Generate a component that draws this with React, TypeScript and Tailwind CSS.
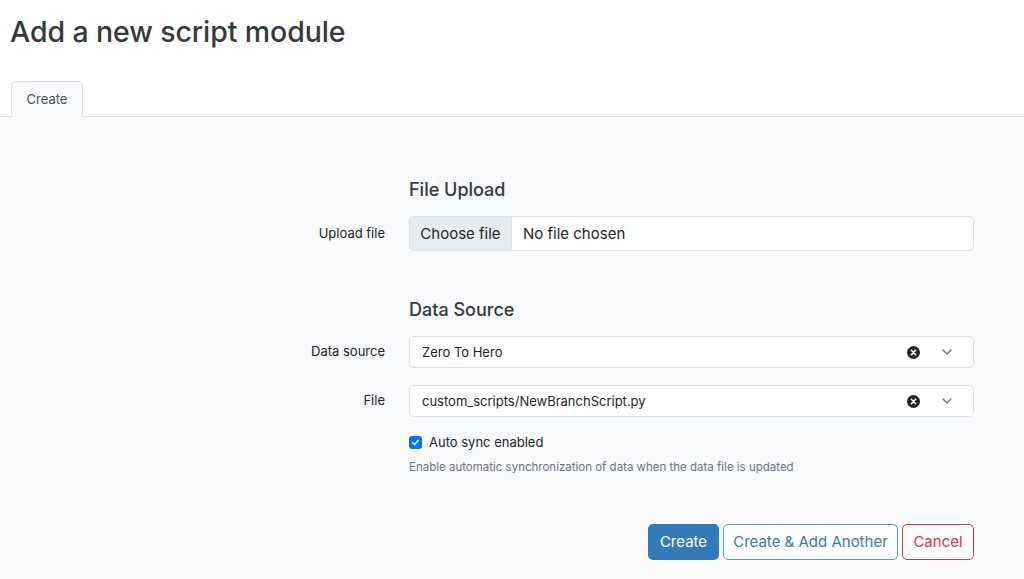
import { ChevronDown } from "lucide-react";

function ClearIcon() {
  return (
    <svg width="13" height="13" viewBox="0 0 16 16" className="shrink-0">
      <circle cx="8" cy="8" r="8" fill="#212529" />
      <path d="M5.3 5.3l5.4 5.4M10.7 5.3l-5.4 5.4" stroke="#fff" strokeWidth="1.8" strokeLinecap="round" />
    </svg>
  );
}

function SelectBox({ value }: { value: string }) {
  return (
    <div className="h-[32px] w-full rounded-[5px] border border-[#dee2e6] bg-white flex items-center pl-3 pr-[18px]">
      <span className="flex-1 text-[13px] text-[#212529] pt-px">{value}</span>
      <ClearIcon />
      <ChevronDown className="ml-[19px] text-[#6c757d]" size={16} strokeWidth={2} />
    </div>
  );
}

function Row({ label, children, className }: { label: string; children: React.ReactNode; className?: string }) {
  return (
    <div className={"flex items-center " + (className ?? "")}>
      <div className="w-[385px] shrink-0 text-right text-[13px] text-[#212529]">{label}</div>
      <div className="ml-6 w-[565px]">{children}</div>
    </div>
  );
}

export default function App() {
  return (
    <div className="w-[1024px] h-[579px] overflow-hidden flex flex-col bg-white text-[#212529]" style={{ fontFamily: "Inter, 'Noto Sans', sans-serif" }}>
      <h1 className="pl-[10px] pt-[14px] text-[28.5px] leading-[36px] font-medium text-[#343a40] tracking-[-0.1px]">Add a new script module</h1>
      <div className="mt-[31px] flex border-b border-[#dee2e6] pl-[11px]">
        <div className="-mb-px h-[36px] w-[72px] rounded-t-[5px] border border-b-0 border-[#dee2e6] bg-[#f8f9fa] flex items-center justify-center text-[13px] text-[#495057]">
          Create
        </div>
      </div>
      <div className="flex-1 bg-[#f8f9fa] flex flex-col">
        <div className="ml-[409px] mt-[62px] text-[18px] leading-[22px] font-medium text-[#343a40]">File Upload</div>
        <Row label="Upload file" className="mt-[15px]">
          <div className="h-[35px] w-full rounded-[5px] border border-[#dee2e6] bg-white flex overflow-hidden">
            <div className="w-[102px] bg-[#e9ecef] border-r border-[#dee2e6] flex items-center justify-center text-[15px] pt-[2px]">Choose file</div>
            <div className="flex items-center pl-[11px] text-[15px] pt-[2px]">No file chosen</div>
          </div>
        </Row>
        <div className="ml-[409px] mt-[48px] text-[18px] leading-[22px] font-medium text-[#343a40]">Data Source</div>
        <Row label="Data source" className="mt-[15px]">
          <SelectBox value="Zero To Hero" />
        </Row>
        <Row label="File" className="mt-[17px]">
          <SelectBox value="custom_scripts/NewBranchScript.py" />
        </Row>
        <div className="ml-[409px] mt-[18px] flex items-center">
          <span className="w-[13px] h-[13px] rounded-[3px] bg-[#0d6efd] flex items-center justify-center">
            <svg width="9" height="9" viewBox="0 0 10 10">
              <path d="M2 5.2l2 2 4-4.4" fill="none" stroke="#fff" strokeWidth="1.7" strokeLinecap="round" strokeLinejoin="round" />
            </svg>
          </span>
          <span className="ml-[7px] text-[13px] leading-[14px]">Auto sync enabled</span>
        </div>
        <div className="ml-[409px] mt-[11px] text-[11.5px] leading-[14px] text-[#6c757d]">
          Enable automatic synchronization of data when the data file is updated
        </div>
        <div className="ml-[648px] mt-[50px] flex gap-[4px]">
          <button className="h-[36px] w-[71px] rounded-[5px] bg-[#337ab7] text-white text-[15px]">Create</button>
          <button className="h-[36px] w-[175px] rounded-[5px] border border-[#5b9bd5] bg-white text-[#337ab7] text-[15px]">Create &amp; Add Another</button>
          <button className="h-[36px] w-[72px] rounded-[5px] border border-[#dc3545] bg-white text-[#dc3545] text-[15px]">Cancel</button>
        </div>
      </div>
    </div>
  );
}
